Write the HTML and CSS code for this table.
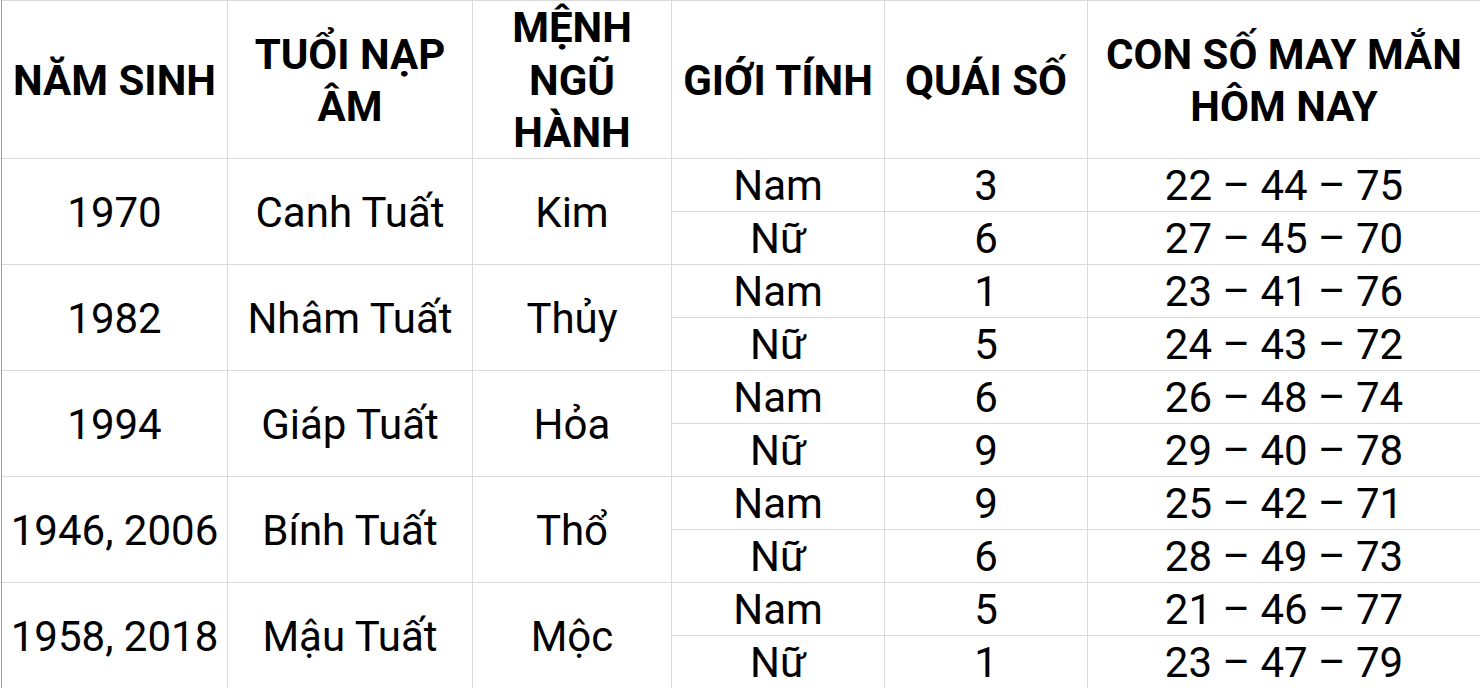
FILE: index.html
```html
<!DOCTYPE html>
<html lang="vi">
<head>
<meta charset="utf-8">
<title>Con số may mắn</title>
<link rel="stylesheet" href="styles.css">
</head>
<body>
<div class="grid">
  <div class="cell head">NĂM SINH</div>
  <div class="cell head">TUỔI NẠP<br>ÂM</div>
  <div class="cell head">MỆNH<br>NGŨ<br>HÀNH</div>
  <div class="cell head">GIỚI TÍNH</div>
  <div class="cell head">QUÁI SỐ</div>
  <div class="cell head">CON SỐ MAY MẮN<br>HÔM NAY</div>

  <div class="cell span">1970</div>
  <div class="cell span">Canh Tuất</div>
  <div class="cell span">Kim</div>
  <div class="cell">Nam</div><div class="cell">3</div><div class="cell">22 – 44 – 75</div>
  <div class="cell">Nữ</div><div class="cell">6</div><div class="cell">27 – 45 – 70</div>

  <div class="cell span">1982</div>
  <div class="cell span">Nhâm Tuất</div>
  <div class="cell span">Thủy</div>
  <div class="cell">Nam</div><div class="cell">1</div><div class="cell">23 – 41 – 76</div>
  <div class="cell">Nữ</div><div class="cell">5</div><div class="cell">24 – 43 – 72</div>

  <div class="cell span">1994</div>
  <div class="cell span">Giáp Tuất</div>
  <div class="cell span">Hỏa</div>
  <div class="cell">Nam</div><div class="cell">6</div><div class="cell">26 – 48 – 74</div>
  <div class="cell">Nữ</div><div class="cell">9</div><div class="cell">29 – 40 – 78</div>

  <div class="cell span">1946, 2006</div>
  <div class="cell span">Bính Tuất</div>
  <div class="cell span">Thổ</div>
  <div class="cell">Nam</div><div class="cell">9</div><div class="cell">25 – 42 – 71</div>
  <div class="cell">Nữ</div><div class="cell">6</div><div class="cell">28 – 49 – 73</div>

  <div class="cell span">1958, 2018</div>
  <div class="cell span">Mậu Tuất</div>
  <div class="cell span">Mộc</div>
  <div class="cell">Nam</div><div class="cell">5</div><div class="cell">21 – 46 – 77</div>
  <div class="cell">Nữ</div><div class="cell">1</div><div class="cell">23 – 47 – 79</div>
</div>
</body>
</html>
```
FILE: styles.css
```css
html, body {
  margin: 0;
  padding: 0;
  background: #ffffff;
  overflow: hidden;
}
body {
  font-family: Roboto, "Noto Sans", sans-serif;
  color: #000000;
}
.grid {
  margin-left: 1px;
  display: grid;
  grid-template-columns: 225px 244px 198px 212px 202px 392px;
  grid-template-rows: 157px repeat(10, 52px);
  gap: 1px;
  padding: 1px 1px 1px 0;
  width: 1479px;
  box-sizing: border-box;
  background: #dadada;
  border-left: 1px solid #9e9e9e;
}
.cell {
  background: #ffffff;
  display: flex;
  align-items: center;
  justify-content: center;
  text-align: center;
  font-size: 42px;
  line-height: 52px;
  padding-top: 2px;
  white-space: nowrap;
}
.head {
  font-weight: 700;
  font-size: 42px;
  line-height: 52.4px;
  padding-top: 3px;
}
.span {
  grid-row: span 2;
}
```
